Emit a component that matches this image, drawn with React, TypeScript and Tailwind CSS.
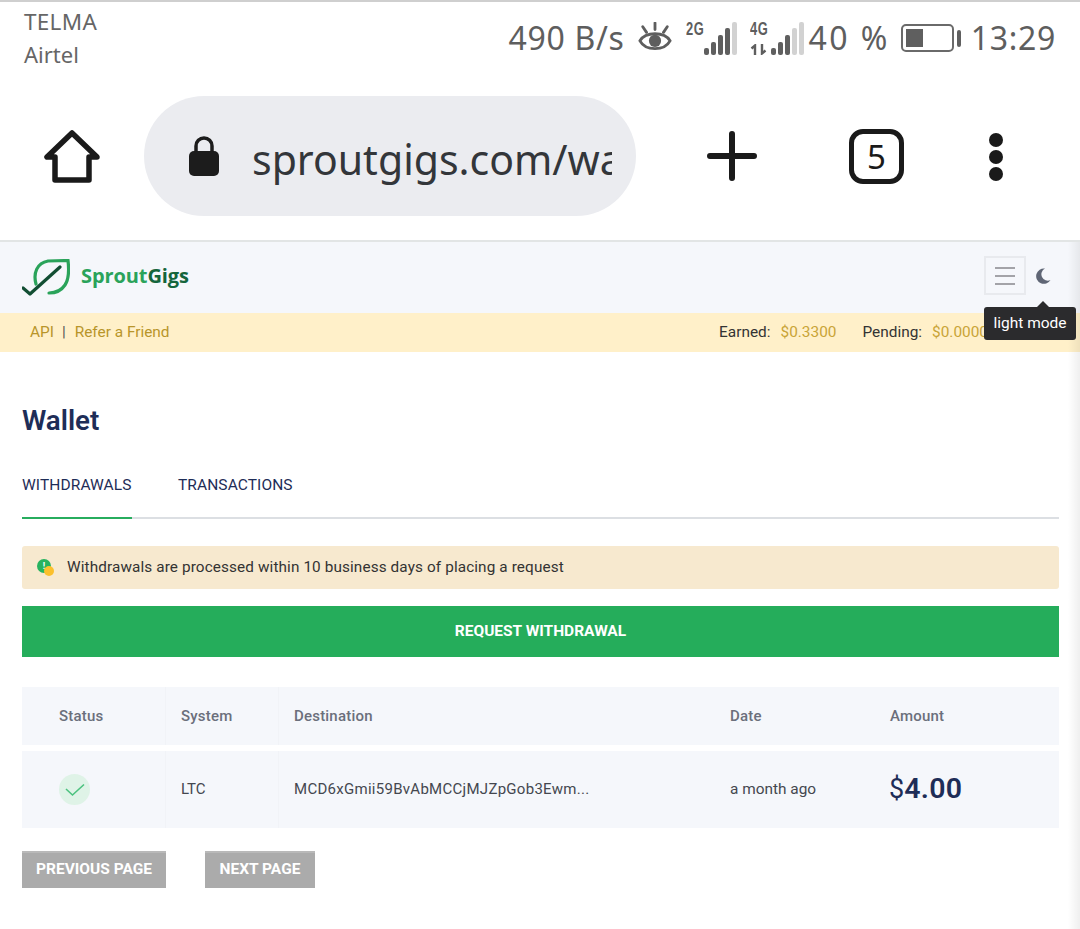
import React from "react";

const Bars = ({ filled }: { filled: number }) => {
  const hs = [7, 13, 20, 27, 33];
  return (
    <div className="flex items-end gap-[2px] h-[33px]">
      {hs.map((h, i) => (
        <div
          key={i}
          className={`w-[5px] rounded-[2px] ${i < filled ? "bg-[#5f5f5f]" : "bg-[#d2d2d2]"}`}
          style={{ height: h }}
        />
      ))}
    </div>
  );
};

const NetLabel = ({ children }: { children: React.ReactNode }) => (
  <span className="absolute left-0 top-[-3px] text-[19px] font-bold leading-none scale-x-[0.68] origin-left font-['Liberation_Sans',sans-serif]">
    {children}
  </span>
);

const StatusBar = () => (
  <div className="h-[76px] flex justify-between text-[#5e5e5e] font-['Noto_Sans',sans-serif]">
    <div className="pl-[24px] pt-[4px] leading-[32px] text-[#666666]">
      <div className="text-[22.5px] tracking-[0.3px]">TELMA</div>
      <div className="text-[22px]">Airtel</div>
    </div>
    <div className="flex items-center h-[72px] pr-[24px] text-[32px] tracking-[0.7px]">
      <span>490 B/s</span>
      <svg width="36" height="32" viewBox="0 0 38 34" className="ml-[12px]" fill="none" stroke="#5e5e5e">
        <path d="M3 20 C9 10 29 10 35 20 C29 31 9 31 3 20Z" strokeWidth="3" />
        <circle cx="19" cy="20" r="6.5" fill="#5e5e5e" stroke="none" />
        <path d="M19 1 V8 M6 5 L10 11 M32 5 L28 11" strokeWidth="3" strokeLinecap="round" />
      </svg>
      <div className="ml-[13px] relative w-[51px] h-[33px] flex justify-end">
        <NetLabel>2G</NetLabel>
        <Bars filled={4} />
      </div>
      <div className="ml-[13px] relative w-[54px] h-[33px] flex justify-end">
        <NetLabel>4G</NetLabel>
        <svg width="17" height="11" viewBox="0 0 17 11" className="absolute left-0 bottom-0" fill="none" stroke="#5e5e5e" strokeWidth="2.4">
          <path d="M5 11 V1.5 L1.5 4.5 M12 0 V9.5 L15.5 6.5" />
        </svg>
        <Bars filled={3} />
      </div>
      <span className="ml-[5px] tracking-[2.4px]">40 %</span>
      <div className="ml-[11px] flex items-center">
        <div className="w-[53px] h-[28px] border-2 border-[#6a6a6a] rounded-[5px] p-[3px]">
          <div className="w-[17px] h-full bg-[#5f5f5f]" />
        </div>
        <div className="ml-[3px] w-[4px] h-[17px] rounded-[2px] bg-[#5f5f5f]" />
      </div>
      <span className="ml-[10px]">13:29</span>
    </div>
  </div>
);

const BrowserBar = () => (
  <div className="h-[162px] flex items-start">
    <div className="w-[144px] pt-[51px] pl-[44px]">
      <svg width="56" height="56" viewBox="0 0 56 56" fill="none" stroke="#1a1a1a" strokeWidth="5.5" strokeLinejoin="round" strokeLinecap="round">
        <path d="M28 4 L3 28 H11 V51 H45 V28 H53 Z" />
      </svg>
    </div>
    <div className="mt-[18px] w-[492px] h-[120px] rounded-[60px] bg-[#ebecf0] flex items-center pl-[44px] overflow-hidden">
      <svg width="32" height="42" viewBox="0 0 32 42" className="shrink-0">
        <path d="M8 17 V11 a8 8 0 0 1 16 0 V17" fill="none" stroke="#1c1c1c" strokeWidth="3.5" />
        <rect x="1" y="16" width="30" height="25" rx="5" fill="#1c1c1c" />
      </svg>
      <div className="ml-[32px] mt-[5px] w-[360px] overflow-hidden whitespace-nowrap text-[41px] leading-[64px] text-[#33363a] font-['Noto_Sans',sans-serif]">
        sproutgigs.com/wallet
      </div>
    </div>
    <div className="pt-[53px] ml-[71px]">
      <svg width="50" height="50" viewBox="0 0 50 50" stroke="#1a1a1a" strokeWidth="6" strokeLinecap="round">
        <path d="M25 3 V47 M3 25 H47" />
      </svg>
    </div>
    <div className="ml-[92px] mt-[51px] w-[55px] h-[55px] rounded-[14px] border-[5px] border-[#1a1a1a] flex items-center justify-center text-[33px] font-normal leading-none text-[#1a1a1a] font-['Noto_Sans',sans-serif]">
      5
    </div>
    <div className="ml-[85px] mt-[55px] flex flex-col gap-[3px]">
      <div className="w-[14px] h-[14px] rounded-full bg-[#1a1a1a]" />
      <div className="w-[14px] h-[14px] rounded-full bg-[#1a1a1a]" />
      <div className="w-[14px] h-[14px] rounded-full bg-[#1a1a1a]" />
    </div>
  </div>
);

const Logo = () => (
  <div className="flex items-center">
    <svg width="48" height="38" viewBox="0 0 48 38" fill="none" className="shrink-0">
      <path d="M14 25 C11 14 15 4 26 2 L46 1.5 C47 10 47 20 43 26 C39 32 33 34 27 34" stroke="#2aa35a" strokeWidth="3.2" strokeLinecap="round" />
      <path d="M1 29 L8 35 L38 8" stroke="#124e33" strokeWidth="3.2" strokeLinecap="round" strokeLinejoin="round" />
    </svg>
    <div className="ml-[11px] pb-[4px] text-[20px] font-bold tracking-[-0.1px] font-['Open_Sans',sans-serif] leading-none">
      <span className="text-[#2aa35a]">Sprout</span>
      <span className="text-[#14653c]">Gigs</span>
    </div>
  </div>
);

const Header = () => (
  <div className="h-[71px] bg-[#f5f7fb] flex items-center justify-between pl-[22px] pr-[29px]">
    <Logo />
    <div className="flex items-center pb-[4px]">
      <div className="w-[42px] h-[39px] border-2 border-[#e8eaee] flex flex-col items-center justify-center gap-[6px]">
        <div className="w-[20px] h-[2px] bg-[#a3a3a8]" />
        <div className="w-[20px] h-[2px] bg-[#a3a3a8]" />
        <div className="w-[20px] h-[2px] bg-[#a3a3a8]" />
      </div>
      <svg width="16" height="16" viewBox="0 0 16 16" className="ml-[9px]">
        <path d="M10 0.5 A7.7 7.7 0 1 0 15.5 12 A5.6 5.6 0 0 1 10 0.5Z" fill="#5f6675" />
      </svg>
    </div>
  </div>
);

const EarnBar = () => (
  <div className="relative h-[39px] bg-[#fff0c9] flex items-center justify-between pl-[30px] text-[15.4px] font-['Roboto',sans-serif]">
    <div className="flex items-center text-[#b8952a]">
      <span>API</span>
      <span className="ml-[8px] mr-[9px] text-[#555]">|</span>
      <span>Refer a Friend</span>
    </div>
    <div className="flex items-center pr-[92px] whitespace-nowrap">
      <span className="text-[#333]">Earned:</span>
      <span className="ml-[10px] text-[#c9a437]">$0.3300</span>
      <span className="ml-[26px] text-[#333]">Pending:</span>
      <span className="ml-[10px] text-[#c9a437]">$0.0000</span>
    </div>
    <div className="absolute left-[984px] top-[-6px] w-[92px] h-[33px] rounded-[3px] bg-[#2b2b2d] text-white flex items-center justify-center text-[15.5px]">
      light mode
      <div className="absolute top-[-6px] left-[52px] w-0 h-0 border-l-[7px] border-r-[7px] border-b-[7px] border-l-transparent border-r-transparent border-b-[#2b2b2d]" />
    </div>
  </div>
);

const Alert = () => (
  <div className="h-[43px] bg-[#f7e9cf] rounded-[3px] flex items-center pl-[15px] text-[15.3px] text-[#333] font-['Roboto',sans-serif]">
    <div className="relative w-[18px] h-[18px] shrink-0">
      <div className="absolute left-0 top-0 w-[14px] h-[14px] rounded-full bg-[#27b35f] text-white text-[9px] font-bold leading-[14px] text-center">!</div>
      <div className="absolute left-[7px] top-[7px] w-[10px] h-[10px] rounded-full bg-[#fbc02d]" />
    </div>
    <span className="ml-[12px] tracking-[0.12px]">Withdrawals are processed within 10 business days of placing a request</span>
  </div>
);

const gridCols = "grid grid-cols-[144px_113px_436px_160px_1fr]";

const Table = () => (
  <div className="mt-[30px] font-['Roboto',sans-serif]">
    <div className={`${gridCols} h-[58px] bg-[#f5f7fb] items-center text-[15px] font-medium text-[#6b6f7b] tracking-[0.2px]`}>
      <div className="pl-[37px] h-full flex items-center border-r border-[#f1f3f7]">Status</div>
      <div className="pl-[15px] h-full flex items-center border-r border-[#f1f3f7]">System</div>
      <div className="pl-[15px]">Destination</div>
      <div className="pl-[15px]">Date</div>
      <div className="pl-[15px]">Amount</div>
    </div>
    <div className={`${gridCols} mt-[6px] h-[77px] bg-[#f5f7fb] items-center text-[15px] text-[#44474f]`}>
      <div className="pl-[37px] h-full flex items-center border-r border-[#f1f3f7]">
        <div className="w-[31px] h-[31px] rounded-full bg-[#dff3e7] flex items-center justify-center">
          <svg width="20" height="14" viewBox="0 0 20 14" fill="none" stroke="#4cc27f" strokeWidth="1.6">
            <path d="M1 6 L7.5 12 L19 1.5" />
          </svg>
        </div>
      </div>
      <div className="pl-[15px] h-full flex items-center border-r border-[#f1f3f7]">LTC</div>
      <div className="pl-[15px] tracking-[0.28px]">MCD6xGmii59BvAbMCCjMJZpGob3Ewm...</div>
      <div className="pl-[15px] text-[15.4px]">a month ago</div>
      <div className="pl-[14px] text-[#1e2d57] flex items-baseline whitespace-nowrap">
        <span className="text-[27px] font-normal">$</span>
        <span className="text-[28.5px] font-semibold tracking-[0.3px]">4.00</span>
      </div>
    </div>
  </div>
);

const PagerButton = ({ children, className }: { children: React.ReactNode; className: string }) => (
  <button className={`h-[37px] pb-[2px] bg-[#ababab] border-t-2 border-[#b9b9b9] text-white text-[15.5px] font-bold font-['Roboto',sans-serif] ${className}`}>
    {children}
  </button>
);

export default function App() {
  return (
    <div className="relative w-[1080px] h-[929px] overflow-hidden bg-white">
      <div className="h-[2px] bg-[#cfcfcf]" />
      <StatusBar />
      <BrowserBar />
      <div className="h-[2px] bg-[#e2e5e5]" />
      <Header />
      <EarnBar />
      <div className="pl-[22px] pr-[21px] font-['Roboto',sans-serif]">
        <h1 className="mt-[52px] text-[27.7px] leading-[34px] font-semibold text-[#1e2d57]">Wallet</h1>
        <div className="mt-[24px] border-b-2 border-[#dcdfe3] h-[57px] flex text-[15.5px] text-[#1e2d57] tracking-[0.1px]">
          <div className="w-[110px] h-[57px] shrink-0 pt-[13px] leading-[20px] border-b-2 border-[#27ad5e]">WITHDRAWALS</div>
          <div className="ml-[46px] pt-[13px] leading-[20px]">TRANSACTIONS</div>
        </div>
        <div className="mt-[27px]"><Alert /></div>
        <button className="mt-[17px] w-full h-[51px] bg-[#25ad5b] text-white text-[15.5px] font-bold">REQUEST WITHDRAWAL</button>
        <Table />
        <div className="mt-[23px] flex gap-[39px]">
          <PagerButton className="w-[144px]">PREVIOUS PAGE</PagerButton>
          <PagerButton className="w-[110px]">NEXT PAGE</PagerButton>
        </div>
      </div>
      <div className="absolute right-0 top-[242px] bottom-0 w-[12px] bg-gradient-to-r from-transparent to-[#00000010]" />
    </div>
  );
}
